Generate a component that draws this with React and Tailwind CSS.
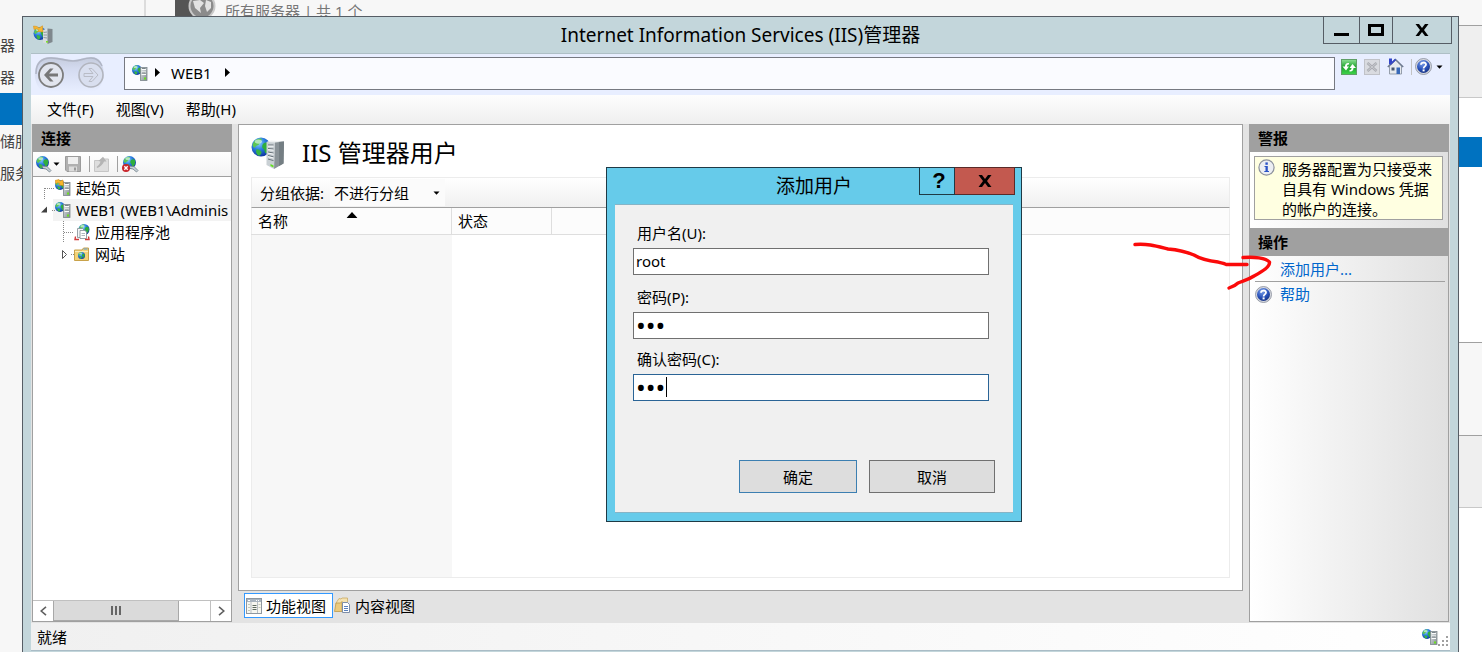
import React, { useState } from 'react';

const Defs = () => (
    <svg width="0" height="0" className="absolute" aria-hidden="true">
        <defs>
            <radialGradient id="globe" cx="0.38" cy="0.3" r="0.75">
                <stop offset="0" stopColor="#8fd4ff" />
                <stop offset="0.45" stopColor="#2b7fe0" />
                <stop offset="1" stopColor="#0b2f9c" />
            </radialGradient>
            <linearGradient id="tower" x1="0" y1="0" x2="1" y2="1">
                <stop offset="0" stopColor="#e4e8ea" />
                <stop offset="1" stopColor="#818b91" />
            </linearGradient>
            <radialGradient id="blueBall" cx="0.4" cy="0.25" r="0.8">
                <stop offset="0" stopColor="#7ea2ea" />
                <stop offset="0.6" stopColor="#2750b8" />
                <stop offset="1" stopColor="#16307e" />
            </radialGradient>
            <linearGradient id="cloud" x1="0" y1="0" x2="0" y2="1">
                <stop offset="0" stopColor="#c4cbdc" />
                <stop offset="0.35" stopColor="#d4dbf0" />
                <stop offset="1" stopColor="#e8eeff" />
            </linearGradient>
            <linearGradient id="greenBox" x1="0" y1="0" x2="0" y2="1">
                <stop offset="0" stopColor="#8fe096" />
                <stop offset="0.5" stopColor="#1da52c" />
                <stop offset="1" stopColor="#3fd44b" />
            </linearGradient>
        </defs>
    </svg>
);

const Globe = ({ cx, cy, r }) => (
    <g transform={`translate(${cx - r} ${cy - r}) scale(${r / 8})`}>
        <circle cx="8" cy="8" r="8" fill="url(#globe)" />
        <path d="M2 3.5 C4 1 7 0.5 8.5 1 C9 3 7 4 6.5 5.5 C6 7 3.5 6.5 3 8.5 C2 9 1 7 0.8 6 Z" fill="#5cc653" />
        <path d="M10 5 C12 3.5 14 4 15 6 C15.5 9 14 12 12 13.5 C10.5 12 11.5 10.5 10 9.5 C8.5 8.5 8.8 6 10 5 Z" fill="#2fae3c" />
        <path d="M4 10 C6 9.5 8 11 8.5 12.5 C8 14.5 7 15.5 6 15.3 C4 14 3.5 12 4 10 Z" fill="#37b543" />
        <ellipse cx="5.8" cy="3.4" rx="3" ry="1.8" fill="#e9fbff" opacity="0.6" />
    </g>
);

const ServerIcon = ({ arrow = false }) => (
    <svg width="16" height="18" viewBox="0 0 16 18" className="shrink-0" aria-hidden="true">
        <Globe cx={5} cy={6} r={5} />
        <rect x="8.5" y="3.5" width="6.5" height="13" fill="url(#tower)" stroke="#7b858b" strokeWidth="0.8" />
        <path d="M9.5 5.5 h4.5 M9.5 8 h4.5 M9.5 10.5 h4.5" stroke="#fbfcfc" />
        <path d="M10 4.5 h3.5 M10 9 h3.5" stroke="#59646b" strokeWidth="0.7" />
        <rect x="12" y="13.5" width="2" height="2" fill="#6be01f" />
        {arrow && <path d="M0 1.5 L4 0.5 L5 2 L8 1 L8.5 6.5 L3.5 6 L5 4.5 L2.5 3.5 L1 5 Z" fill="#f8b62c" stroke="#c9810f" strokeWidth="0.5" />}
    </svg>
);

const TitleIcon = () => (
    <svg width="20" height="20" viewBox="0 0 20 20" className="shrink-0" aria-hidden="true">
        <Globe cx={7} cy={8.5} r={6.5} />
        <path d="M10 5 L14.5 3.5 L14.5 19 L10 17.5 Z" fill="#d7dcdf" />
        <path d="M14.5 3.5 L19.5 4 L19.5 17 L14.5 19 Z" fill="#7f888d" />
        <path d="M10.5 7.5 L14 7 M10.5 10 L14 10 M10.5 12.5 L14 13" stroke="#7c868b" strokeWidth="0.8" />
        <rect x="13" y="16" width="2" height="1.6" fill="#7ae02d" />
        <path d="M0.5 1 L4 1.5 L6 3 L9.5 0.8 L10 7 L4.5 6.5 L6 5 L3.5 3.8 L1 4.5 Z" fill="#f7b533" stroke="#d58c13" strokeWidth="0.5" />
    </svg>
);

const BigServerIcon = () => (
    <svg width="34" height="34" viewBox="0 0 34 34" className="shrink-0" aria-hidden="true">
        <Globe cx={10} cy={11} r={9.5} />
        <path d="M15.5 6 L24 5 L23 33 L15.5 29 Z" fill="#c9d0d4" />
        <path d="M24 5 L33 5.5 L32.5 27.5 L23 33 Z" fill="#8a9398" />
        <path d="M28 5.2 L33 5.5 L32.5 27.5 L28 30 Z" fill="#747e83" />
        <path d="M15.5 6 L20 4.5 L33 5.5 L24 6.5 Z" fill="#eef1f2" />
        <path d="M17 9 L22.5 9 M17 12.5 L22.5 13 M17 16 L22.5 17 M17 19.5 L22.5 20.8 M17 23 L22.5 24.6" stroke="#68737a" strokeWidth="1" />
        <path d="M17 10.2 L22.5 10.2 M17 13.7 L22.5 14.2 M17 17.2 L22.5 18.2 M17 20.7 L22.5 22" stroke="#f5f7f8" strokeWidth="1" />
        <path d="M19.5 28 L22.5 29.5 L22.5 31.5 L19.5 30 Z" fill="#63e01c" />
    </svg>
);

const ConnectIcon = ({ remove = false }) => (
    <svg width="17" height="17" viewBox="0 0 17 17" className="shrink-0" aria-hidden="true">
        <Globe cx={7.5} cy={6.5} r={6.5} />
        <path d="M7 10 L12 10.5 L16 14.5 L14.5 16 L11 13 L8 12.5 Z" fill="#c6d0d6" stroke="#6d7c86" strokeWidth="0.8" />
        {remove && (
            <g>
                <circle cx="4" cy="12" r="4" fill="#c9262c" />
                <path d="M2.3 10.3 L5.7 13.7 M5.7 10.3 L2.3 13.7" stroke="#fff" strokeWidth="1.4" />
            </g>
        )}
    </svg>
);

const SaveIcon = () => (
    <svg width="16" height="16" viewBox="0 0 16 16" className="shrink-0" aria-hidden="true">
        <path d="M0.5 0.5 H15.5 V15.5 H2 L0.5 14 Z" fill="#b0b0b0" stroke="#9b9b9b" />
        <rect x="3" y="1" width="10" height="7" fill="#efefef" />
        <rect x="4" y="10.5" width="8" height="5" fill="#dcdcdc" />
        <rect x="9" y="11.5" width="2" height="3" fill="#999" />
    </svg>
);

const FolderUpIcon = () => (
    <svg width="15" height="16" viewBox="0 0 15 16" className="shrink-0" aria-hidden="true">
        <path d="M0.5 4.5 H6 L7.5 3 H14.5 V15.5 H0.5 Z" fill="#dedede" stroke="#c6c6c6" />
        <path d="M2.5 11 C4 10 6 8 6.5 5.5 L4.5 5 L9 0.8 L12.5 5.5 L10 5.6 C9 8.5 6.5 10.8 3.5 12 Z" fill="#b4b4b4" />
    </svg>
);

const PoolIcon = () => (
    <svg width="16" height="17" viewBox="0 0 16 17" className="shrink-0" aria-hidden="true">
        <Globe cx={10} cy={5.5} r={5.5} />
        <path d="M3.5 4.5 H8.5 L10.5 6.5 V13.5 H3.5 Z" fill="#f4f6f7" stroke="#7f8b93" strokeWidth="0.8" />
        <path d="M6 6.5 H11 L12.5 8 V14.5 H6 Z" fill="#fff" stroke="#7f8b93" strokeWidth="0.8" />
        <path d="M7.5 9.5 h3.5 M7.5 11.5 h3.5" stroke="#9aa5ac" strokeWidth="0.8" />
        <path d="M1.5 12.5 L1 15.5 H5 M14.5 12.5 L15 15.5 H11" fill="none" stroke="#d03a3a" strokeWidth="1.4" />
    </svg>
);

const SitesIcon = () => (
    <svg width="15" height="15" viewBox="0 0 15 15" className="shrink-0" aria-hidden="true">
        <path d="M0.5 3 H8 L9.5 1 H14.5 V13.5 H0.5 Z" fill="#f3d277" stroke="#c9a24a" />
        <path d="M9.5 2 h4" stroke="#5a9be0" />
        <path d="M1 4.5 H14" stroke="#fbecb9" />
        <Globe cx={7.5} cy={8.5} r={3.5} />
    </svg>
);

const HelpIcon = () => (
    <svg width="17" height="17" viewBox="0 0 17 17" className="shrink-0" aria-hidden="true">
        <circle cx="8.5" cy="8.5" r="8" fill="#d6d8de" stroke="#858b99" strokeWidth="0.8" />
        <circle cx="8.5" cy="8.5" r="6.5" fill="url(#blueBall)" />
        <path d="M6 6.8 C6 3.8 11 3.8 11 6.6 C11 8.4 8.6 8.4 8.6 10.4" fill="none" stroke="#fff" strokeWidth="1.8" />
        <rect x="7.6" y="11.4" width="2" height="2" fill="#fff" />
    </svg>
);

const InfoIcon = () => (
    <svg width="17" height="17" viewBox="0 0 17 17" className="shrink-0" aria-hidden="true">
        <circle cx="8.5" cy="8.5" r="7.6" fill="#eceef3" stroke="#8b909c" strokeWidth="1.2" />
        <rect x="7.4" y="3.4" width="2.4" height="2.4" fill="#2b53c6" />
        <path d="M6.5 7 H9.8 V12 H11 V13 H6.3 V12 H7.5 V8 H6.5 Z" fill="#2b53c6" />
    </svg>
);

const RefreshIcon = () => (
    <svg width="16" height="16" viewBox="0 0 16 16" aria-hidden="true">
        <rect x="0.5" y="0.5" width="15" height="15" fill="url(#greenBox)" stroke="#5f9f66" />
        <path d="M8 4 C5.5 3.5 4 5 4 7.5 H1.5 L5 11.5 L8 7.5 H6 C6 6 6.5 5.5 8 5.5 Z" fill="#fff" />
        <path d="M8.5 12.5 C11 13 12.5 11.5 12.5 9 H15 L11.5 5 L8.5 9 H10.5 C10.5 10.5 10 11 8.5 11 Z" fill="#fff" />
    </svg>
);

const StopIcon = () => (
    <svg width="16" height="16" viewBox="0 0 16 16" aria-hidden="true">
        <rect x="0.5" y="0.5" width="15" height="15" fill="#d9dbe0" stroke="#c0c2c8" />
        <path d="M3.5 4 L12.5 12 M12.5 4 L3.5 12" stroke="#aaacb2" strokeWidth="2.6" />
        <path d="M3.5 4 L12.5 12 M12.5 4 L3.5 12" stroke="#c9cbd0" strokeWidth="1" />
    </svg>
);

const HomeIcon = () => (
    <svg width="17" height="17" viewBox="0 0 17 17" aria-hidden="true">
        <rect x="2" y="0.5" width="3" height="6" fill="#3346c8" />
        <path d="M2.5 8 L9 2 L14.5 8 V16 H2.5 Z" fill="#e6eaee" stroke="#8c96a4" strokeWidth="0.9" />
        <path d="M0.8 9 L8.5 1.5 L16.2 9" fill="none" stroke="#6f7c92" strokeWidth="1.6" />
        <path d="M3.2 6.5 L8.5 1.4" stroke="#3346c8" strokeWidth="1.6" />
        <rect x="4.5" y="9.5" width="3" height="3" fill="#47566f" />
        <rect x="9.5" y="9.5" width="3.5" height="6.5" fill="#3869b8" />
    </svg>
);

const FeaturesIcon = () => (
    <svg width="16" height="16" viewBox="0 0 16 16" className="shrink-0" aria-hidden="true">
        <rect x="0.5" y="0.5" width="15" height="15" fill="#f6f6f0" stroke="#8e97a0" />
        <rect x="1" y="1" width="14" height="3" fill="#a9b4bf" />
        <path d="M10 2.5 h1 M12 2.5 h1 M2 2.5 h2" stroke="#fff" />
        <path d="M5 4 V15 M11.5 4 V15" stroke="#b7bec4" />
        <path d="M2 6.5 h2 M2 9.5 h2 M2 12.5 h2 M12.5 6.5 h2 M12.5 9.5 h2" stroke="#c5c9b8" />
        <path d="M6.5 7.5 h4 M6.5 9.5 h4 M6.5 11.5 h4" stroke="#5f6b60" />
    </svg>
);

const ContentIcon = () => (
    <svg width="17" height="17" viewBox="0 0 17 17" className="shrink-0" aria-hidden="true">
        <path d="M2 6 L5 1.5 L7 2 L8 1 H13.5 V13 H3 Z" fill="#f5e2b0" stroke="#c9ab66" strokeWidth="0.8" />
        <path d="M0.5 14.5 L2 6 H6.5 L8 4.5 V14.5 Z" fill="#ecca7c" stroke="#bb9a4e" strokeWidth="0.8" />
        <path d="M8.5 5.5 H13.5 L15.5 7.5 V15.5 H8.5 Z" fill="#fff" stroke="#7d8ea8" />
        <path d="M10 9.5 h4 M10 11.5 h4 M10 13.5 h4" stroke="#5a81bd" />
    </svg>
);

const Caret = ({ className = '' }) => (
    <svg width="7" height="4" viewBox="0 0 7 4" className={`shrink-0 ${className}`} aria-hidden="true">
        <path d="M0.5 0.5 H6.5 L3.5 3.8 Z" fill="#000" />
    </svg>
);

const CrumbArrow = () => (
    <svg width="5" height="9" viewBox="0 0 5 9" className="shrink-0" aria-hidden="true">
        <path d="M0 0 L5 4.5 L0 9 Z" fill="#000" />
    </svg>
);

const CloseMark = () => (
    <svg width="14" height="12" viewBox="0 0 14 12" aria-hidden="true">
        <path d="M0.5 0 H4 L7 4 L10 0 H13.5 L9 6 L13.5 12 H10 L7 8 L4 12 H0.5 L5 6 Z" fill="#000" />
    </svg>
);

const menus = ['文件(F)', '视图(V)', '帮助(H)'];

const sideItems = [
    { label: '器', active: false },
    { label: '器', active: false },
    { label: '', active: true },
    { label: '储服', active: false },
    { label: '服务', active: false },
];

const PanelTitle = ({ children }) => (
    <h2 className="bg-[#a0a0a0] pl-2 h-7 leading-7 font-bold">{children}</h2>
);

const ServerManager = () => (
    <div className="flex h-full bg-white text-[#444]">
        <div className="w-[146px] shrink-0 bg-[#f7f7f7] border-r-2 border-[#dcdcdc] pt-[29px]">
            {sideItems.map((item, i) => (
                <div key={i} className={`h-8 leading-8 overflow-hidden ${item.active ? 'bg-[#0072c0]' : ''}`}>
                    {item.label}
                </div>
            ))}
        </div>
        <div className="flex-1 flex items-start bg-[#f7f7f7] pl-[29px] gap-2">
            <svg width="42" height="16" viewBox="0 0 42 16" aria-hidden="true">
                <rect width="18" height="16" fill="#555" />
                <circle cx="27" cy="6" r="12.5" fill="#8b8b8b" stroke="#c9c9c9" strokeWidth="2" />
                <path d="M18 1 L25 0 L29 3 L25 8 L26 13 L20 8 Z" fill="#e2e2e2" />
                <path d="M31 0 L36 2 L36 8 L32 12 L30 6 Z" fill="#e2e2e2" />
            </svg>
            <span className="text-[#777]">所有服务器 | 共 1 个</span>
        </div>
        <div className="w-6 shrink-0 flex flex-col">
            <div className="h-[26px] bg-[#f7f7f7] border-b border-[#a0a0a0]" />
            <div className="h-[72px] bg-[#efefef] border-b border-[#c8c8c8]" />
            <div className="h-[39px]" />
            <div className="h-[30px] bg-[#0072c0]" />
            <div className="h-[176px] border-b border-[#a0a0a0]" />
            <div className="h-[93px] bg-[#f7f7f7] border-b border-[#a0a0a0]" />
            <div className="h-[72px] bg-[#efefef] border-b border-[#c8c8c8]" />
        </div>
    </div>
);

const NavButtons = () => (
    <div className="relative w-[93px] h-[41px] shrink-0 flex items-start pt-2 pl-[7px] gap-[14px]">
        <svg width="80" height="41" viewBox="0 0 80 41" className="absolute left-0 top-0" aria-hidden="true">
            <path d="M4 24 C3 8 10 3 20 3 C30 3 34 6 42 6 C50 6 52 3 60 3 C69 3 73 10 73 22 C70 36 64 38 58 38 H20 C10 38 6 34 4 24 Z" fill="url(#cloud)" />
            <path d="M5 20 C5 8 11 4 20 4 C30 4 34 7 42 7 C50 7 52 4 60 4 C66 4 69 7 71 12" fill="none" stroke="#a9aebd" strokeWidth="1.6" opacity="0.8" />
        </svg>
        <button className="relative" aria-label="后退">
            <svg width="26" height="26" viewBox="0 0 26 26">
                <circle cx="13" cy="13" r="12" fill="#e2e5ee" stroke="#7d7d7d" strokeWidth="1.8" />
                <path d="M6 13 L12 6.5 H15.5 L11 11.5 H20 V14.5 H11 L15.5 19.5 H12 Z" fill="#777" />
            </svg>
        </button>
        <button className="relative" aria-label="前进">
            <svg width="26" height="26" viewBox="0 0 26 26">
                <circle cx="13" cy="13" r="12" fill="#d9dfef" stroke="#b2b5be" strokeWidth="1.6" />
                <path d="M20 13 L14 6.5 H11 L15 11.5 H6 V14.5 H15 L11 19.5 H14 Z" fill="none" stroke="#b9bcc6" />
            </svg>
        </button>
    </div>
);

const AddressBar = () => (
    <div className="flex items-start bg-[#e8eeff] h-[41px]">
        <NavButtons />
        <div className="flex-1 mt-[3px] h-[33px] flex items-center border border-[#767981] bg-[#fafbff] pl-[7px] pb-[2px]">
            <ServerIcon />
            <span className="pl-[7px]"><CrumbArrow /></span>
            <span className="pl-[11px] pr-[13px]">WEB1</span>
            <CrumbArrow />
        </div>
        <div className="flex items-center gap-[7px] pt-1 pl-[6px] pr-[7px]">
            <button aria-label="刷新"><RefreshIcon /></button>
            <button aria-label="停止"><StopIcon /></button>
            <button aria-label="主页"><HomeIcon /></button>
            <span className="w-px h-4 bg-[#c3c3c3]" />
            <button className="flex items-center gap-1 -ml-1" aria-label="帮助"><HelpIcon /><Caret /></button>
        </div>
    </div>
);

const Branch = ({ kind }) => (
    <svg width="22" height="22" viewBox="0 0 22 22" className="shrink-0" aria-hidden="true">
        {kind === 'first' && <path d="M11.5 11 V22 M12 11.5 H22" stroke="#888" strokeDasharray="1 1" fill="none" />}
        {kind === 'open' && (
            <g>
                <path d="M14 7.5 V13.5 H8 Z" fill="#404040" />
                <path d="M19 11.5 H22" stroke="#888" strokeDasharray="1 1" />
            </g>
        )}
        {kind === 'child' && <path d="M11.5 0 V22 M12 11.5 H22" stroke="#888" strokeDasharray="1 1" fill="none" />}
        {kind === 'closed' && (
            <g>
                <path d="M10.5 7.5 L14.5 11.5 L10.5 15.5 Z" fill="#fff" stroke="#555" />
                <path d="M19 11.5 H22" stroke="#888" strokeDasharray="1 1" />
            </g>
        )}
    </svg>
);

const ConnectionsPanel = () => (
    <aside className="w-[200px] shrink-0 flex flex-col border border-t-0 border-[#a0a0a0] bg-white">
        <PanelTitle>连接</PanelTitle>
        <div className="flex items-center h-[25px] pl-[2px] border-b border-[#a0a0a0] bg-linear-to-b from-white to-[#f3f3f3]">
            <button className="flex items-center gap-px" aria-label="连接到服务器"><ConnectIcon /><Caret /></button>
            <button className="ml-[5px]" aria-label="保存"><SaveIcon /></button>
            <span className="w-px h-4 bg-[#a0a0a0] ml-2 mr-1" />
            <button aria-label="上一级"><FolderUpIcon /></button>
            <span className="w-px h-4 bg-[#a0a0a0] ml-2 mr-1" />
            <button aria-label="删除连接"><ConnectIcon remove /></button>
        </div>
        <div className="flex-1 overflow-hidden whitespace-nowrap">
            <div className="flex items-center h-[22px]">
                <Branch kind="first" />
                <ServerIcon arrow />
                <span className="pl-[5px]">起始页</span>
            </div>
            <div className="flex items-center h-[22px] bg-linear-to-r from-transparent from-[20px] to-[#f3f3f3] to-[20px]">
                <Branch kind="open" />
                <ServerIcon />
                <span className="pl-[5px]">WEB1 (WEB1\Adminis</span>
            </div>
            <div className="flex items-center h-[22px] pl-[19px]">
                <Branch kind="child" />
                <PoolIcon />
                <span className="pl-[5px]">应用程序池</span>
            </div>
            <div className="flex items-center h-[22px] pl-[19px]">
                <Branch kind="closed" />
                <SitesIcon />
                <span className="pl-[6px]">网站</span>
            </div>
        </div>
        <div className="flex h-[21px] border-t border-[#c0c0c0]">
            <button className="w-5 flex items-center justify-center" aria-label="向左滚动">
                <svg width="7" height="10" viewBox="0 0 7 10"><path d="M6 0.8 L1.2 5 L6 9.2" fill="none" stroke="#606060" strokeWidth="1.6" /></svg>
            </button>
            <div className="w-[126px] flex items-center justify-center gap-[2px] bg-[#dadada] border border-t-0 border-[#a8a8a8]">
                <span className="w-[2px] h-[9px] bg-[#666]" />
                <span className="w-[2px] h-[9px] bg-[#666]" />
                <span className="w-[2px] h-[9px] bg-[#666]" />
            </div>
            <div className="flex-1" />
            <button className="w-[21px] border-l border-[#c0c0c0] flex items-center justify-center" aria-label="向右滚动">
                <svg width="7" height="10" viewBox="0 0 7 10"><path d="M1 0.8 L5.8 5 L1 9.2" fill="none" stroke="#606060" strokeWidth="1.6" /></svg>
            </button>
        </div>
    </aside>
);

const UsersPage = () => (
    <main className="flex-1 min-w-0 flex flex-col">
        <section className="flex-1 flex flex-col border border-[#a0a0a0] bg-white px-3 pb-3">
            <div className="flex items-center h-[52px] pt-1 gap-[17px]">
                <BigServerIcon />
                <h1 className="text-2xl leading-8">IIS 管理器用户</h1>
            </div>
            <div className="flex items-center h-[31px] pl-2 border-t border-x border-b border-[#ececec] border-b-[#a0a0a0] bg-linear-to-b from-white to-[#f0f0f0]">
                <label htmlFor="group">分组依据:</label>
                <div className="relative ml-[6px]">
                    <select id="group" className="appearance-none w-[115px] h-[27px] pl-1 bg-[#fbfbfb] outline-none">
                        <option>不进行分组</option>
                    </select>
                    <Caret className="absolute right-[5px] top-[12px] pointer-events-none" />
                </div>
            </div>
            <div className="flex-1 flex">
                <table className="w-full table-fixed border-collapse border border-t-0 border-[#ececec]">
                    <thead>
                        <tr className="h-[26px] bg-[#fcfcfc] border-b border-[#dedede]">
                            <th className="relative w-[200px] pl-[6px] text-left font-normal border-r border-[#dedede]">
                                名称
                                <svg width="11" height="6" viewBox="0 0 11 6" className="absolute left-1/2 -translate-x-1/2 top-1" aria-hidden="true">
                                    <path d="M0 6 L5.5 0 L11 6 Z" fill="#000" />
                                </svg>
                            </th>
                            <th className="w-[100px] pl-[6px] text-left font-normal border-r border-[#dedede]">状态</th>
                            <th />
                        </tr>
                    </thead>
                    <tbody>
                        <tr>
                            <td className="bg-[#f7f7f7]" />
                            <td />
                            <td />
                        </tr>
                    </tbody>
                </table>
            </div>
        </section>
        <div className="flex items-center h-[31px] pl-[6px] pb-[2px] gap-px">
            <button className="flex items-center gap-1 h-[25px] pl-[1px] pr-[6px] border border-[#3399ff] bg-white">
                <FeaturesIcon />功能视图
            </button>
            <button className="flex items-center gap-1 h-[25px]">
                <ContentIcon />内容视图
            </button>
        </div>
    </main>
);

const ActionsPanel = () => (
    <aside className="w-[200px] shrink-0 border border-t-0 border-[#a0a0a0] bg-linear-to-r from-white to-[#e0e0e0]">
        <PanelTitle>警报</PanelTitle>
        <div className="m-1 mr-[5px] mb-2 flex gap-[7px] pl-[3px] pr-1 pt-[2px] border border-[#a0a0a0] bg-[#ffffe1] leading-5">
            <InfoIcon />
            <p>服务器配置为只接受来自具有 Windows 凭据的帐户的连接。</p>
        </div>
        <PanelTitle>操作</PanelTitle>
        <ul className="text-[#0066cc]">
            <li className="h-[25px] leading-[26px] ml-[30px]"><a href="#add">添加用户...</a></li>
            <li className="h-[25px] ml-[5px] mr-[3px] flex items-center gap-2 border-t border-[#a0a0a0]">
                <HelpIcon />
                <a href="#help">帮助</a>
            </li>
        </ul>
    </aside>
);

const AddUserDialog = () => {
    const [form, setForm] = useState({ name: 'root', password: 'abc', confirm: 'abc' });
    const update = (key) => (e) => setForm(prev => ({ ...prev, [key]: e.target.value }));

    return (
        <div role="dialog" aria-labelledby="dialog-title"
            className="absolute left-[606px] top-[167px] w-[416px] flex flex-col border border-[#1f3a45] bg-[#66cbea] px-2 pb-2">
            <div className="grid grid-cols-[1fr_auto_1fr] h-9">
                <span />
                <h2 id="dialog-title" className="text-[19px] leading-9">添加用户</h2>
                <div className="flex justify-end h-7 -mt-px -mr-[2px]">
                    <button className="w-9 flex items-center justify-center pl-1 border border-[#1f3a45] font-['Liberation_Sans'] text-[22px] leading-none font-bold" aria-label="帮助">?</button>
                    <button className="w-[60px] flex items-center justify-center border border-l-0 border-[#5a2a28] bg-[#c3594f]" aria-label="关闭"><CloseMark /></button>
                </div>
            </div>
            <form className="flex flex-col border-y border-[#86b4c6] bg-[#f0f0f0] pt-[15px] pb-[19px] px-[18px]" onSubmit={e => e.preventDefault()}>
                <label htmlFor="name" className="pl-1 pb-[2px] leading-[26px]">用户名(U):</label>
                <input id="name" value={form.name} onChange={update('name')}
                    className="mr-[6px] h-[27px] px-[2px] pb-[2px] border border-[#707070] bg-white outline-none" />
                <label htmlFor="password" className="pl-1 pb-[2px] mt-[9px] leading-[26px]">密码(P):</label>
                <input id="password" type="password" value={form.password} onChange={update('password')}
                    className="mr-[6px] h-[27px] px-[2px] pb-[2px] border border-[#707070] bg-white outline-none text-[26px]" />
                <label htmlFor="confirm" className="pl-1 pb-[2px] mt-[7px] leading-[26px]">确认密码(C):</label>
                <div className="relative mr-[6px] flex">
                    <input id="confirm" type="password" value={form.confirm} onChange={update('confirm')}
                        className="w-full min-w-0 h-[27px] px-[2px] pb-[2px] border border-[#2a6496] bg-white outline-none text-[26px]" />
                    <span className="absolute left-[33px] top-[3px] w-px h-5 bg-black" />
                </div>
                <div className="flex justify-end gap-3 mt-[59px]">
                    <button type="submit" className="w-[118px] h-[33px] border border-[#3c7fb1] bg-[#dddddd]">确定</button>
                    <button type="button" className="w-[126px] h-[33px] border border-[#707070] bg-[#dddddd]">取消</button>
                </div>
            </form>
        </div>
    );
};

const App = () => (
    <div className="relative h-screen overflow-hidden font-['Noto_Sans','Noto_Sans_CJK_SC',sans-serif] text-[15px] leading-[22px] text-black">
        <Defs />
        <ServerManager />

        {/* IIS manager window */}
        <div className="absolute left-[22px] right-[23px] top-4 bottom-0 flex flex-col border border-b-0 border-[#565d65] bg-[#c3d6db] px-2 pb-px">
            <header className="grid grid-cols-[1fr_auto_1fr] h-[37px] border-b border-[#aebfc6]">
                <span className="pl-[2px] pt-2"><TitleIcon /></span>
                <h1 className="text-[19px] leading-[37px]">Internet Information Services (IIS)管理器</h1>
                <div className="flex justify-end h-7 -mt-px -mr-[2px]">
                    <button className="w-[37px] border border-[#565d65] flex items-end justify-center pb-[7px]" aria-label="最小化">
                        <span className="w-[15px] h-[3px] bg-black" />
                    </button>
                    <button className="w-[33px] border border-l-0 border-[#565d65] flex items-center justify-center" aria-label="最大化">
                        <span className="w-4 h-3 border-[3px] border-black" />
                    </button>
                    <button className="w-[59px] border border-l-0 border-[#565d65] flex items-center justify-center" aria-label="关闭"><CloseMark /></button>
                </div>
            </header>
            <AddressBar />
            <nav className="flex items-center gap-[22px] h-[29px] pl-4 pb-[2px] bg-linear-to-b from-[#fdfdfd] to-[#efefef]">
                {menus.map(m => (
                    <button key={m}>{m}</button>
                ))}
            </nav>
            <div className="flex-1 min-h-0 flex gap-[6px] bg-[#e3e3e3] px-px pb-px">
                <ConnectionsPanel />
                <UsersPage />
                <ActionsPanel />
            </div>
            <footer className="flex items-center justify-between h-7 pl-[6px] pr-[2px] border-b border-[#a9bcc6] bg-linear-to-r from-[#f0f0f0] to-white">
                <span>就绪</span>
                <span className="flex items-end">
                    <ServerIcon />
                    <svg width="10" height="10" viewBox="0 0 10 10" aria-hidden="true">
                        <path d="M8 0 h2 v2 h-2 Z M4 4 h2 v2 h-2 Z M8 4 h2 v2 h-2 Z M0 8 h2 v2 h-2 Z M4 8 h2 v2 h-2 Z M8 8 h2 v2 h-2 Z" fill="#a0a0a0" />
                    </svg>
                </span>
            </footer>
        </div>

        <AddUserDialog />

        {/* Hand-drawn arrow */}
        <svg width="150" height="60" viewBox="0 0 150 60" className="absolute left-[1130px] top-[238px] pointer-events-none" aria-hidden="true">
            <path d="M5 6.5 C18 5.5 26 8 38 11 C50 12 57 14 64 17 C72 22 80 23 88 24 C90 25 94 25 96 26.5 H117" fill="none" stroke="#fb0a0a" strokeWidth="3.4" strokeLinecap="round" strokeLinejoin="round" />
            <path d="M113 19.5 C124 18.5 136 20 139.5 24 C140 29 133 33 124 38 C118 42 112 43 108 45 C105 48 102 49 99 50" fill="none" stroke="#fb0a0a" strokeWidth="3.4" strokeLinecap="round" strokeLinejoin="round" />
        </svg>
    </div>
);

export default App;
